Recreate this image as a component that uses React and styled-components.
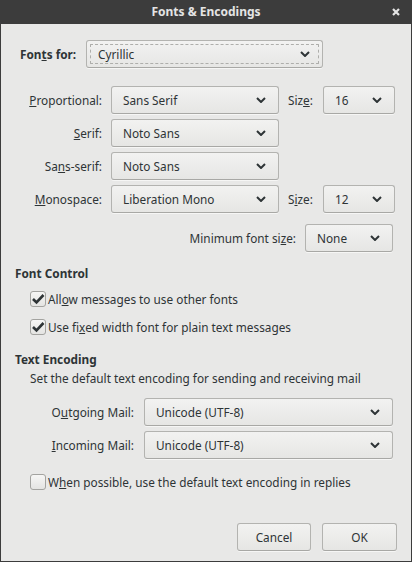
import React from 'react';
import styled, { createGlobalStyle } from 'styled-components';

const GlobalStyle = createGlobalStyle`
  html, body {
    margin: 0;
    padding: 0;
    background: #e8e8e7;
  }
  body {
    font-family: "Noto Sans", "DejaVu Sans", sans-serif;
    font-size: 11.8px;
    color: #2e3436;
  }
  * {
    box-sizing: border-box;
  }
`;

const Window = styled.div`
  width: 412px;
  height: 562px;
  display: flex;
  flex-direction: column;
  border: 1px solid #3c3c3c;
  border-top: none;
  background: #e8e8e7;
  line-height: 18px;
`;

const TitleBar = styled.div`
  height: 24px;
  margin: 0 -1px;
  background: #3c3c3c;
  display: flex;
  align-items: center;
  justify-content: center;
  position: relative;
  color: #e4e4e4;
  font-weight: 700;
  font-size: 12px;
`;

const CloseButton = styled.span`
  position: absolute;
  right: 12px;
  top: 8px;
  width: 8px;
  height: 8px;
  display: flex;
`;

const Content = styled.div`
  flex: 1;
  display: flex;
  flex-direction: column;
  padding-top: 16px;
`;

const FontsForRow = styled.div`
  display: grid;
  grid-template-columns: 66px 237px;
  align-items: center;
  padding-left: 19px;
  height: 28px;
  margin-bottom: 18px;
`;

const BoldLabel = styled.span`
  font-weight: 700;
  white-space: nowrap;
`;

const FormGrid = styled.div`
  display: grid;
  grid-template-columns: ${({ $columns }) => $columns};
  grid-auto-rows: 28px;
  column-gap: ${({ $gap }) => $gap || 9}px;
  row-gap: 5px;
  align-items: center;
  margin-top: ${({ $top }) => $top || 0}px;
`;

const Label = styled.span`
  white-space: nowrap;
  text-align: ${({ $align }) => $align || 'right'};
  padding-left: ${({ $pad }) => $pad || 0}px;
`;

const SelectBox = styled.div`
  position: relative;
  height: ${({ $h }) => $h || 28}px;
  width: ${({ $w }) => ($w ? `${$w}px` : 'auto')};
  display: flex;
  align-items: center;
  justify-content: space-between;
  padding: 0 12px 0 ${({ $padLeft }) => $padLeft || 11}px;
  border: 1px solid #b3b3b0;
  border-bottom-color: #a8a8a5;
  border-radius: 3px;
  background: linear-gradient(to bottom, #f2f2f1 0%, #e6e6e4 100%);
  box-shadow: 0 1px 0 rgba(255, 255, 255, 0.6);
  white-space: nowrap;

  ${({ $focused }) =>
    $focused &&
    `
    &::after {
      content: '';
      position: absolute;
      inset: 3px;
      border: 1px dashed #aeaeab;
      border-radius: 1px;
      pointer-events: none;
    }
  `}
`;

const MinRow = styled.div`
  display: flex;
  justify-content: flex-end;
  align-items: center;
  gap: 9px;
  padding-right: 18px;
  height: 28px;
  margin-top: 11px;
`;

const Heading = styled.div`
  font-weight: 700;
  padding-left: 14px;
  margin-top: ${({ $top }) => $top}px;
`;

const CheckRow = styled.label`
  display: flex;
  align-items: center;
  gap: 2px;
  height: 28px;
  padding-left: 29px;
  margin-top: ${({ $top }) => $top || 0}px;
`;

const CheckBox = styled.span`
  width: 16px;
  height: 16px;
  flex: none;
  display: flex;
  align-items: center;
  justify-content: center;
  border: 1px solid #a3a3a0;
  border-radius: 3px;
  background: linear-gradient(to bottom, #f6f6f5 0%, #e4e4e2 100%);
`;

const CheckText = styled.span`
  white-space: nowrap;
`;

const Description = styled.div`
  padding-left: 29px;
  margin-top: 1px;
`;

const ButtonRow = styled.div`
  margin-top: auto;
  display: flex;
  justify-content: flex-end;
  gap: 11px;
  padding: 0 14px 10px 0;
`;

const Button = styled.button`
  width: ${({ $w }) => $w}px;
  height: 28px;
  font: inherit;
  color: #2e3436;
  border: 1px solid #b3b3b0;
  border-bottom-color: #a8a8a5;
  border-radius: 3px;
  background: linear-gradient(to bottom, #f2f2f1 0%, #e6e6e4 100%);
  box-shadow: 0 1px 0 rgba(255, 255, 255, 0.6);
  padding: 0;
`;

const Chevron = () => (
  <svg width="10" height="6" viewBox="0 0 10 6" style={{ flex: 'none' }}>
    <path d="M1 1 L5 5 L9 1" fill="none" stroke="#2e3436" strokeWidth="2" />
  </svg>
);

const Check = () => (
  <svg width="14" height="14" viewBox="0 0 14 14">
    <path d="M2 7 L5.5 10.5 L12.5 3" fill="none" stroke="#2e3436" strokeWidth="2.6" />
  </svg>
);

const Select = ({ value, ...rest }) => (
  <SelectBox {...rest}>
    <span>{value}</span>
    <Chevron />
  </SelectBox>
);

export default function App() {
  return (
    <>
      <GlobalStyle />
      <Window>
        <TitleBar>
          Fonts &amp; Encodings
          <CloseButton>
            <svg width="8" height="8" viewBox="0 0 8 8">
              <path d="M1 1 L7 7 M7 1 L1 7" stroke="#e4e4e4" strokeWidth="2.2" />
            </svg>
          </CloseButton>
        </TitleBar>
        <Content>
          <FontsForRow>
            <BoldLabel>
              Fon<u>t</u>s for:
            </BoldLabel>
            <Select value="Cyrillic" $focused />
          </FontsForRow>

          <FormGrid $columns="101px 168px 26px 72px">
            <Label>
              <u>P</u>roportional:
            </Label>
            <Select value="Sans Serif" />
            <Label $align="left">
              Siz<u>e</u>:
            </Label>
            <Select value="16" />

            <Label>
              <u>S</u>erif:
            </Label>
            <Select value="Noto Sans" />
            <span />
            <span />

            <Label>
              Sa<u>n</u>s-serif:
            </Label>
            <Select value="Noto Sans" />
            <span />
            <span />

            <Label>
              <u>M</u>onospace:
            </Label>
            <Select value="Liberation Mono" />
            <Label $align="left">
              S<u>i</u>ze:
            </Label>
            <Select value="12" />
          </FormGrid>

          <MinRow>
            <Label>
              Minimum font si<u>z</u>e:
            </Label>
            <Select value="None" $w={88} />
          </MinRow>

          <Heading $top={12}>Font Control</Heading>
          <CheckRow $top={3}>
            <CheckBox>
              <Check />
            </CheckBox>
            <CheckText>
              All<u>o</u>w messages to use other fonts
            </CheckText>
          </CheckRow>
          <CheckRow>
            <CheckBox>
              <Check />
            </CheckBox>
            <CheckText>
              Use fi<u>x</u>ed width font for plain text messages
            </CheckText>
          </CheckRow>

          <Heading $top={9}>Text Encoding</Heading>
          <Description>Set the default text encoding for sending and receiving mail</Description>

          <FormGrid $columns="133px 249px" $gap={10} $top={11}>
            <Label>
              O<u>u</u>tgoing Mail:
            </Label>
            <Select value="Unicode (UTF-8)" />
            <Label>
              <u>I</u>ncoming Mail:
            </Label>
            <Select value="Unicode (UTF-8)" />
          </FormGrid>

          <CheckRow $top={9}>
            <CheckBox />
            <CheckText>
              W<u>h</u>en possible, use the default text encoding in replies
            </CheckText>
          </CheckRow>

          <ButtonRow>
            <Button $w={74}>Cancel</Button>
            <Button $w={75}>OK</Button>
          </ButtonRow>
        </Content>
      </Window>
    </>
  );
}
